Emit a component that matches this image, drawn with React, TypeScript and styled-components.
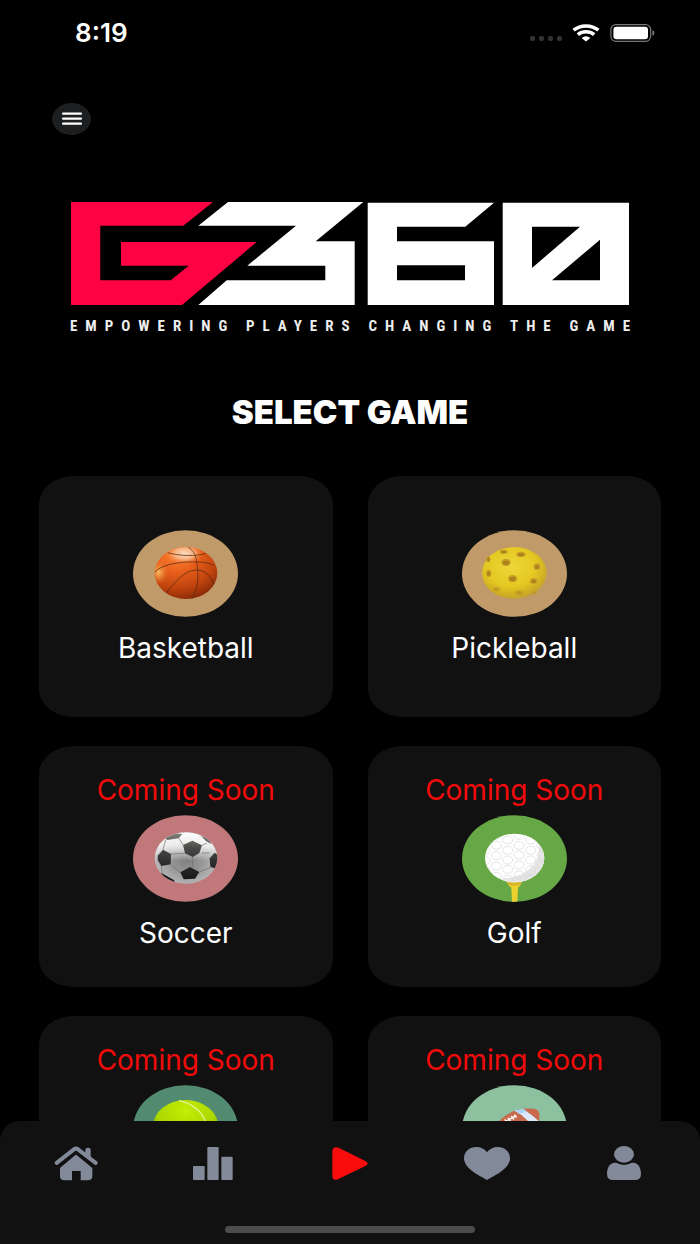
import React from "react";
import styled, { createGlobalStyle } from "styled-components";

const GlobalStyle = createGlobalStyle`
  * { box-sizing: border-box; }
  body {
    margin: 0;
    background: #000;
    color: #fff;
    font-family: Inter, "Liberation Sans", sans-serif;
  }
  button {
    border: 0;
    padding: 0;
    background: none;
    color: inherit;
    font: inherit;
    cursor: pointer;
  }
  svg { display: block; }
`;

const Screen = styled.div`
  display: flex;
  flex-direction: column;
  height: 100vh;
  background: #000;
`;

const StatusBar = styled.div`
  display: flex;
  flex: none;
  align-items: center;
  justify-content: space-between;
  height: 66px;
  padding: 0 45px 0 75px;
`;

const Clock = styled.time`
  font-size: 26px;
  font-weight: 600;
  line-height: 32px;
`;

const Indicators = styled.div`
  display: flex;
  align-items: center;
  gap: 10px;
`;

const Content = styled.main`
  flex: 1;
  min-height: 0;
  overflow-y: auto;
  scrollbar-width: none;
`;

const Header = styled.header`
  padding: 37px 52px 0;
`;

const MenuButton = styled.button`
  display: grid;
  place-items: center;
  width: 39px;
  height: 32px;
  border-radius: 50%;
  background: #1d1e20;
`;

const Brand = styled.div`
  padding: 66px 70px 0;
  svg { width: 100%; height: auto; }
`;

/* The right margin takes back the tracking after the last letter. */
const Tagline = styled.p`
  display: flex;
  justify-content: space-between;
  margin: 12px -8px 0 0;
  font-family: "Liberation Sans Narrow", "Roboto Condensed", "Liberation Sans", sans-serif;
  font-size: 15px;
  font-weight: 700;
  line-height: 16px;
  letter-spacing: 8px;
  color: #eee;
  white-space: nowrap;
`;

const Title = styled.h1`
  margin: 58px 0 44px;
  font-size: 33px;
  font-weight: 900;
  line-height: 40px;
  text-align: center;
`;

const Grid = styled.div`
  display: grid;
  grid-template-columns: 1fr 1fr;
  gap: 29px 35px;
  padding: 0 39px 29px;
`;

const Card = styled.button<{ $soon: boolean }>`
  display: flex;
  flex-direction: column;
  align-items: center;
  justify-content: flex-start;
  min-height: 241px;
  padding-top: ${(p) => (p.$soon ? 29 : 54)}px;
  border-radius: 34px / 28px;
  background: #111;
`;

const Soon = styled.span`
  margin-bottom: 10px;
  font-size: 28px;
  line-height: 30px;
  color: #f30b0b;
`;

const Label = styled.span`
  margin-top: 16px;
  font-size: 28px;
  line-height: 30px;
`;

const NavBar = styled.nav`
  display: flex;
  flex: none;
  flex-direction: column;
  align-items: center;
  justify-content: space-between;
  padding: 24px 8px 11px;
  height: 123px;
  border-radius: 20px 20px 0 0;
  background: #111;
`;

const Tabs = styled.div`
  display: flex;
  width: 100%;
`;

const Tab = styled.button<{ $active?: boolean }>`
  display: grid;
  flex: 1;
  place-items: center;
  height: 36px;
  color: ${(p) => (p.$active ? "#f90c0c" : "#828998")};
`;

const HomeIndicator = styled.div`
  width: 250px;
  height: 7px;
  border-radius: 4px;
  background: #4c4c4c;
`;

function SignalDots() {
  return (
    <svg width="32" height="17" viewBox="0 0 32 17" fill="#333" aria-hidden="true">
      {[0, 9, 18, 27].map((x) => (
        <rect key={x} x={x} y="11" width="5" height="5" rx="2" />
      ))}
    </svg>
  );
}

function Wifi() {
  return (
    <svg width="28" height="18" viewBox="0 0 28 18" aria-hidden="true">
      <g fill="none" stroke="#fff" strokeWidth="3.6">
        <path d="M1.6 6.2C8.5 0.5 19.5 0.5 26.4 6.2" />
        <path d="M5.8 10.6C10.5 6.8 17.5 6.8 22.2 10.6" />
      </g>
      <path d="M9.6 13.9Q14 10.5 18.4 13.9L14 17.6Z" fill="#fff" />
    </svg>
  );
}

function Battery() {
  return (
    <svg width="45" height="18" viewBox="0 0 45 18" aria-hidden="true">
      <rect x="0.9" y="0.7" width="39.8" height="16.6" rx="5" fill="none" stroke="#777" strokeWidth="1.2" />
      <rect x="3.4" y="2.8" width="34.6" height="12.4" rx="3" fill="#fff" />
      <path d="M42.4 6.2Q44.5 7 44.5 9T42.4 11.8Z" fill="#777" />
    </svg>
  );
}

function Logo() {
  return (
    <svg viewBox="0 0 560 105" role="img" aria-label="G360">
      <path
        fill="#ff0244"
        d="M1 1H143L113.3 24.7H30.3V79.3H100.7L118.7 64.7H51V41H186.7L112 104H1Z"
      />
      <g fill="#fff" fillRule="evenodd">
        <path d="M158 1H293.3L245.7 40.3H284.7V104H128.3L156.7 79.3H255.3V64.7H177.3L226 24.7H128.3Z" />
        <path d="M297.7 1.7H424L395.3 25.7H327V40.3H424V104H297.7ZM327 64.3V79.3H395V64.3Z" />
        <path d="M432.7 1.7H559V104H432.7ZM462 25.7V67L510 25.7ZM530 38.7V79.3H482Z" />
      </g>
    </svg>
  );
}

/* Every ball sits on the same oval, drawn in a 315 x 260 space. */
function Ball({ tint, children }: { tint: string; children: React.ReactNode }) {
  return (
    <svg width="105" height="87" viewBox="0 0 315 261" aria-hidden="true">
      <ellipse cx="157.5" cy="130.5" rx="157.5" ry="130" fill={tint} />
      {children}
    </svg>
  );
}

function Basketball() {
  return (
    <Ball tint="#c09b69">
      <defs>
        <radialGradient id="bb" cx="0.35" cy="0.15" r="0.9">
          <stop offset="0" stopColor="#ff8437" />
          <stop offset="0.35" stopColor="#ea611c" />
          <stop offset="0.7" stopColor="#bd420e" />
          <stop offset="1" stopColor="#792407" />
        </radialGradient>
        <radialGradient id="bbShine">
          <stop offset="0" stopColor="#f9dcc0" />
          <stop offset="0.5" stopColor="#f7c196" stopOpacity="0.85" />
          <stop offset="1" stopColor="#f58840" stopOpacity="0" />
        </radialGradient>
        <radialGradient id="bbSide">
          <stop offset="0" stopColor="#f8bd60" />
          <stop offset="1" stopColor="#f18035" stopOpacity="0" />
        </radialGradient>
        <clipPath id="bbClip">
          <ellipse cx="159" cy="129" rx="94" ry="78" />
        </clipPath>
      </defs>
      <g clipPath="url(#bbClip)">
        <rect x="60" y="45" width="200" height="170" fill="url(#bb)" />
        <ellipse cx="154" cy="71" rx="56" ry="32" fill="url(#bbShine)" />
        <ellipse cx="77" cy="127" rx="28" ry="36" fill="url(#bbSide)" />
        <g fill="none" stroke="#552811" strokeWidth="3" opacity="0.75">
          <path d="M66 126C84 106 124 98 164 96S224 98 243 106" />
          <path d="M166 52C184 64 190 80 191 98C196 132 200 164 177 207" />
          <path d="M99 190C128 154 154 122 189 120C214 119 230 134 243 164" />
          <path d="M104 68C140 78 188 80 220 70" />
        </g>
      </g>
    </Ball>
  );
}

const pickleHoles = [
  [125, 65, 12, 6], [177, 73, 14, 8], [132, 97, 14, 11], [79, 88, 6, 9],
  [225, 110, 10, 10], [80, 130, 8, 11], [152, 146, 14, 11], [215, 153, 11, 9],
  [103, 177, 12, 7], [171, 188, 14, 7], [218, 187, 9, 4],
];

function Pickleball() {
  return (
    <Ball tint="#c09b69">
      <defs>
        <radialGradient id="pb" cx="0.45" cy="0.38" r="0.62">
          <stop offset="0" stopColor="#eed73b" />
          <stop offset="0.6" stopColor="#e5c922" />
          <stop offset="0.9" stopColor="#ceac23" />
          <stop offset="1" stopColor="#c2a040" />
        </radialGradient>
      </defs>
      <ellipse cx="157" cy="129" rx="97" ry="78" fill="url(#pb)" />
      {pickleHoles.map(([x, y, rx, ry], i) => (
        <g key={i}>
          <ellipse cx={x} cy={y} rx={rx} ry={ry} fill="#c79f26" opacity={i > 7 ? 0.6 : 1} />
          <ellipse cx={x} cy={y + 1} rx={rx * 0.65} ry={ry * 0.6} fill="#ab7c1b" opacity={i > 7 ? 0.4 : 0.9} />
        </g>
      ))}
    </Ball>
  );
}

function Soccer() {
  return (
    <Ball tint="#c0787b">
      <defs>
        <radialGradient id="sc" cx="0.5" cy="0.55" r="0.55">
          <stop offset="0" stopColor="#808080" />
          <stop offset="0.45" stopColor="#989898" />
          <stop offset="0.85" stopColor="#b9b9b9" />
          <stop offset="1" stopColor="#8e8e8e" />
        </radialGradient>
        <linearGradient id="scShine" x1="0" y1="0" x2="0" y2="1">
          <stop offset="0" stopColor="#fff" />
          <stop offset="0.28" stopColor="#fff" stopOpacity="0.75" />
          <stop offset="0.55" stopColor="#fff" stopOpacity="0" />
        </linearGradient>
        <linearGradient id="scPatch" gradientUnits="userSpaceOnUse" x1="0" y1="52" x2="0" y2="206">
          <stop offset="0" stopColor="#85857f" />
          <stop offset="0.3" stopColor="#4a4a48" />
          <stop offset="0.6" stopColor="#2c2c2c" />
          <stop offset="1" stopColor="#141414" />
        </linearGradient>
        <clipPath id="scClip">
          <ellipse cx="159" cy="129" rx="94" ry="77" />
        </clipPath>
      </defs>
      <g clipPath="url(#scClip)">
        <rect x="60" y="48" width="200" height="162" fill="url(#sc)" />
        <rect x="60" y="48" width="200" height="162" fill="url(#scShine)" />
        <g fill="none" stroke="#6d6d6d" strokeWidth="2">
          <path d="M156 115L114 117M179 126V156M207 114L230 114M150 90L138 70M207 91L222 84M113 148L142 172M199 171L232 158M85 153L88 178M90 104L98 75" />
        </g>
        <g fill="url(#scPatch)">
          <path d="M150 90L178 77L207 91L199 114L179 126L156 115Z" />
          <path d="M74 122L90 104L114 117L113 148L85 153L74 135Z" />
          <path d="M142 172L171 156L199 171L186 191L152 193Z" />
          <path d="M230 130L245 113L255 120V150L246 160L232 156Z" />
          <path d="M95 70L121 54L148 57L137 70L103 75Z" />
          <path d="M84 173L124 196L124 206L92 194Z" />
          <path d="M203 62L225 70L236 88L219 78Z" />
        </g>
      </g>
    </Ball>
  );
}

const dimples = [
  [103, [60, 91, 122, 153, 184]],
  [69, [78, 107, 137, 166]],
  [137, [75, 106, 135, 163, 193]],
  [171, [61, 91, 120, 150, 180]],
  [206, [75, 106, 135, 165, 193]],
  [240, [91, 120, 150]],
] as [number, number[]][];

function Golf() {
  return (
    <Ball tint="#67a846">
      <defs>
        <clipPath id="gfClip">
          <ellipse cx="158" cy="129" rx="89" ry="73" />
        </clipPath>
        <clipPath id="gfOval">
          <ellipse cx="157.5" cy="130.5" rx="157.5" ry="130" />
        </clipPath>
      </defs>
      <g clipPath="url(#gfOval)">
        <path d="M135 199H179Q178 211 168 218L166 261H150L148 218Q136 211 135 199Z" fill="#ecd02e" />
        <path d="M135 201H179Q175 211 167 212H148Q138 210 135 201Z" fill="#d7b628" />
      </g>
      <g clipPath="url(#gfClip)">
        <rect x="60" y="50" width="200" height="160" fill="#fff" />
        <path d="M228 74C244 140 196 186 124 190V210H255V74Z" fill="#e5e5e5" />
        <g fill="none" stroke="#d6d6d6" strokeWidth="2">
          {dimples.map(([x, ys]) =>
            ys.map((y) => <ellipse key={`${x}-${y}`} cx={x} cy={y} rx="15" ry="12" />)
          )}
        </g>
      </g>
    </Ball>
  );
}

function Tennis() {
  return (
    <Ball tint="#538b70">
      <defs>
        <radialGradient id="tn" cx="0.5" cy="0.2" r="0.8">
          <stop offset="0" stopColor="#c3ee05" />
          <stop offset="0.55" stopColor="#abd600" />
          <stop offset="1" stopColor="#749900" />
        </radialGradient>
      </defs>
      <ellipse cx="158" cy="125" rx="98" ry="80" fill="url(#tn)" />
      <path d="M138 47C174 54 208 78 218 112C222 140 210 170 190 194" fill="none" stroke="#e2f48a" strokeWidth="4" />
    </Ball>
  );
}

function Football() {
  return (
    <Ball tint="#8cc09f">
      <path d="M84 190C78 130 124 66 214 71Q230 72 232 86C236 150 190 204 104 198Q86 198 84 190Z" fill="#c8694c" />
      <path d="M158 77L184 72Q208 88 230 108L222 126L198 108Q180 88 158 77Z" fill="#dbe9f9" />
      <path d="M158 77L184 72L195 81L171 86Z" fill="#acd5fb" />
      <path d="M120 115L163 92" fill="none" stroke="#fff" strokeWidth="4" />
      <path d="M128 103L136 114M138 98L146 109M148 93L156 104M157 89L163 98" stroke="#fff" strokeWidth="4" />
    </Ball>
  );
}

function HomeIcon() {
  return (
    <svg width="44" height="35" viewBox="0 0 132 104" preserveAspectRatio="none" fill="currentColor" aria-hidden="true">
      <path d="M8 50L57 12Q66 4 75 12L125 50" fill="none" stroke="currentColor" strokeWidth="12" strokeLinecap="round" strokeLinejoin="round" />
      <path d="M94 11Q94 5 102 5T110 11V34L94 22Z" />
      <path d="M66 25L115 65V90Q115 102 101 102H80V74H54V102H32Q18 102 18 90V65Z" />
    </svg>
  );
}

function StatsIcon() {
  return (
    <svg width="40" height="33" viewBox="0 0 120 99" fill="currentColor" aria-hidden="true">
      <rect x="0" y="57" width="35" height="42" rx="3" />
      <rect x="43" y="0" width="34" height="99" rx="3" />
      <rect x="85" y="29" width="34" height="70" rx="3" />
    </svg>
  );
}

function PlayIcon() {
  return (
    <svg width="36" height="33" viewBox="0 0 109 99" fill="currentColor" aria-hidden="true">
      <path d="M1 13Q1 0 12 0Q17 0 23 3L101 42Q115 49 101 57L24 94Q17 99 11 99Q1 99 1 86Z" />
    </svg>
  );
}

function HeartIcon() {
  return (
    <svg width="46" height="33" viewBox="0 0 138 99" fill="currentColor" aria-hidden="true">
      <path d="M69 99C44 85 0 64 0 34C0 14 16 0 37 0C51 0 62 6 69 16C76 6 87 0 101 0C122 0 138 14 138 34C138 64 94 85 69 99Z" />
    </svg>
  );
}

function ProfileIcon() {
  return (
    <svg width="34" height="34" viewBox="0 0 102 102" fill="currentColor" aria-hidden="true">
      <ellipse cx="51" cy="25" rx="30" ry="25" />
      <path d="M24 50C32 50 36 56 51 56S70 50 78 50C94 50 102 65 102 84Q102 102 84 102H18Q0 102 0 84C0 65 8 50 24 50Z" />
    </svg>
  );
}

const games = [
  { name: "Basketball", soon: false, art: <Basketball /> },
  { name: "Pickleball", soon: false, art: <Pickleball /> },
  { name: "Soccer", soon: true, art: <Soccer /> },
  { name: "Golf", soon: true, art: <Golf /> },
  { name: "Tennis", soon: true, art: <Tennis /> },
  { name: "Football", soon: true, art: <Football /> },
];

const tabs = [
  { name: "Home", icon: <HomeIcon /> },
  { name: "Stats", icon: <StatsIcon /> },
  { name: "Play", icon: <PlayIcon />, active: true },
  { name: "Favorites", icon: <HeartIcon /> },
  { name: "Profile", icon: <ProfileIcon /> },
];

const tagline = ["EMPOWERING", "PLAYERS", "CHANGING", "THE", "GAME"];

export default function App() {
  return (
    <Screen>
      <GlobalStyle />
      <StatusBar>
        <Clock>8:19</Clock>
        <Indicators>
          <SignalDots />
          <Wifi />
          <Battery />
        </Indicators>
      </StatusBar>
      <Content>
        <Header>
          <MenuButton aria-label="Menu">
            <svg width="20" height="14" viewBox="0 0 20 14" fill="#fff" aria-hidden="true">
              <rect y="0.4" width="20" height="2.4" rx="1" />
              <rect y="5.4" width="20" height="2.4" rx="1" />
              <rect y="10.4" width="20" height="2.4" rx="1" />
            </svg>
          </MenuButton>
        </Header>
        <Brand>
          <Logo />
          <Tagline>
            {tagline.map((word) => (
              <span key={word}>{word}</span>
            ))}
          </Tagline>
        </Brand>
        <Title>SELECT GAME</Title>
        <Grid>
          {games.map((g) => (
            <Card key={g.name} $soon={g.soon}>
              {g.soon && <Soon>Coming Soon</Soon>}
              {g.art}
              <Label>{g.name}</Label>
            </Card>
          ))}
        </Grid>
      </Content>
      <NavBar>
        <Tabs>
          {tabs.map((t) => (
            <Tab key={t.name} $active={t.active} aria-label={t.name}>
              {t.icon}
            </Tab>
          ))}
        </Tabs>
        <HomeIndicator />
      </NavBar>
    </Screen>
  );
}
